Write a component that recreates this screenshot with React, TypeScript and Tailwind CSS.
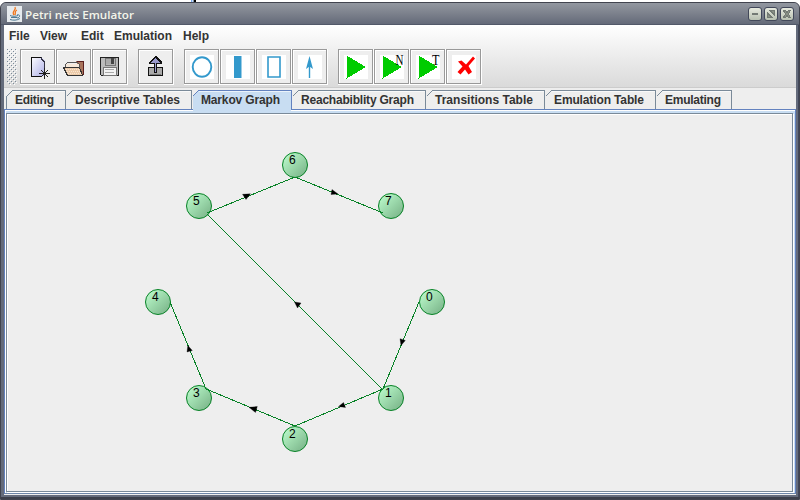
import React from 'react';

const menus = [
  { label: 'File', w: 'w-[31px]' },
  { label: 'View', w: 'w-[41px]' },
  { label: 'Edit', w: 'w-[33px]' },
  { label: 'Emulation', w: 'w-[69px]' },
  { label: 'Help', w: 'w-[40px]' },
];

const tabs = [
  { label: 'Editing', w: 60, t: 39 },
  { label: 'Descriptive Tables', w: 126, t: 105 },
  { label: 'Markov Graph', w: 100, t: 79, active: true },
  { label: 'Reachabiblity Graph', w: 134, t: 113 },
  { label: 'Transitions Table', w: 119, t: 98 },
  { label: 'Emulation Table', w: 111, t: 90 },
  { label: 'Emulating', w: 76, t: 56 },
];

function Label({ children, width }: { children: string; width: number }) {
  return (
    <svg width={width + 2} height="16" className="block shrink-0 overflow-visible">
      <text x="0" y="12" textLength={width} className="fill-[#333] text-[12px] font-bold">{children}</text>
    </svg>
  );
}

const play = <path d="M2.500 .5v23l19.500-11.500z" fill="#00cc00" />;

const icons: Record<string, React.ReactNode> = {
  fresh: (
    <>
      <path d="M5 2h10l4 4v15H5z" fill="url(#paper)" />
      <path d="M5.500 21V2.500h10M5 21.500h10" stroke="#111" fill="none" />
      <path d="M15.500 2v2h1v1h1v1h1v7" stroke="#334" fill="none" />
      <path d="M18.500 13v11M13 18.500h11M15 15l7 7M22 15l-7 7" stroke="#222" fill="none" />
    </>
  ),
  open: (
    <>
      <path d="M14 6h7v14h-3z" fill="#a9745c" />
      <path d="M13 7.500h2v-1h6V20" stroke="#5c2020" fill="none" />
      <path d="M4 9h13v6H4z" fill="#f6e8d9" />
      <path d="M1.500 12.500h16l3 8H5.500z" fill="#eccbaa" stroke="#333" />
      <path d="M3.500 12V9.500l2-2h10l2 2v3" stroke="#555" fill="none" />
      <path d="M4 14.500h13M5 16.500h13M6 18.500h13" stroke="#fae5d0" strokeDasharray="1 1" />
    </>
  ),
  save: (
    <>
      <path d="M2.500 2.500h18v18h-17l-1-1z" fill="#bbb" stroke="#222" />
      <path d="M7 3h10v7H7z" fill="#b5b5b5" stroke="#777" />
      <path d="M8 4h5v5H8z" fill="#aaa" /><path d="M13 3h3v6h-3z" fill="#444" />
      <path d="M5 12h13v8H5z" fill="#f4f4f4" stroke="#777" />
      <path d="M7 14.500h9M7 17.500h9" stroke="#aaa" />
    </>
  ),
  up: (
    <>
      <path d="M4 12h15v9H4z" fill="#111" />
      <path d="M5 13h13v7H5z" fill="#aaa" />
      <path d="M6 19h11" stroke="#777" />
      <path d="M10 18V9H5V7l6-6h1l6 6v2h-5v9z" fill="#111" />
      <path d="M11 17V8H7l4-5h1l4 5h-4v9z" fill="#9999cc" />
    </>
  ),
  place: <ellipse cx="12" cy="12" rx="9.300" ry="9.800" fill="none" stroke="#3399cc" strokeWidth="1.900" shapeRendering="auto" />,
  bar: <path d="M8 1h7.500v22H8z" fill="#3399cc" shapeRendering="auto" />,
  box: <path d="M6 2h12v20H6z" fill="#fff" stroke="#3399cc" strokeWidth="1.600" shapeRendering="auto" />,
  arc: (
    <g shapeRendering="auto"><path d="M11.500 1l3.500 13-3.500-2.500L8 14z" fill="#3399cc" /><path d="M11.500 10v13" stroke="#3399cc" strokeWidth="1.400" /></g>
  ),
  play,
  playN: play,
  playT: play,
  stop: <path d="M6 6.500l3.500-1 4.500 4 7-8 2 2-6.500 7.500 3.500 6-3.500 2.500-3.500-5-4.500 5-3-2.500 5-5.500z" fill="#f00" shapeRendering="auto" />,
};

function Tool({ name, letter }: { name: string; letter?: string }) {
  const plain = ['fresh', 'open', 'save', 'up'].includes(name);
  return (
    <div className="flex h-[36px] w-[36px] border-r border-b border-white">
      <div className="flex h-[35px] w-[35px] border border-[#999] bg-[#eee] pt-[5px] pl-[5px] shadow-[inset_1px_1px_0_#fff]">
        <svg width="24" height="24" viewBox="0 0 24 24" shapeRendering="crispEdges" className={plain ? 'shrink-0 overflow-visible' : 'shrink-0 overflow-visible bg-white'}>
          {icons[name]}
          {letter && <text x={letter === 'N' ? 15.5 : 16} y="10" textLength={letter === 'N' ? 8 : 7.5} lengthAdjust="spacingAndGlyphs" className="fill-black font-['Liberation_Serif',serif] text-[14px]">{letter}</text>}
        </svg>
      </div>
    </div>
  );
}

const nodes = [
  [432, 302], [391, 398], [295, 439], [199, 398],
  [158, 302], [199, 206], [295, 165], [391, 206],
];

const edges = [
  'M207 213L295 177', 'M295 177L383 213', 'M419 302L383 389',
  'M383 389L295 426', 'M295 426L206 389', 'M206 389L170 302',
];

const arrows = [
  'M242.500 194.300L250.500 193.800L246 199.500z',
  'M332 189.500L338 194L331 194.500z',
  'M400 338.700L405.300 340.500L401 345.500z',
  'M338.500 406.500L343.500 402.500L345.500 407.500z',
  'M249 407.300L257.300 406.500L255.500 412.500z',
  'M187.800 345.500L192.300 350.500L187 352z',
  'M294.500 302L301 303L297.500 308z',
];

function Graph() {
  return (
    <svg width="786" height="376" viewBox="8 115 786 376" className="block">
      <defs>
        <linearGradient id="ball" x1="0" y1="0" x2="1" y2="1">
          <stop offset="0.150" stopColor="#b5f4c5" /><stop offset="0.900" stopColor="#7cb68b" />
        </linearGradient>
      </defs>
      {nodes.map(([x, y], i) => (
        <g key={i}>
          <circle cx={x} cy={y} r="12.500" fill="url(#ball)" stroke="#078226" />
          <text x={x - 6} y={y - 1} className="fill-black text-[12px]">{i}</text>
        </g>
      ))}
      <g fill="none" stroke="#078226" shapeRendering="crispEdges">
        {edges.map((d) => <path key={d} d={d} />)}
        <path d="M382.500 389.500L207.500 214.500" />
      </g>
      <g>{arrows.map((d) => <path key={d} d={d} stroke="#000" strokeWidth="0.300" />)}</g>
    </svg>
  );
}

function WindowButton({ d }: { d: string }) {
  return (
    <div className="h-[14px] w-[14px] rounded-[3px] border border-[#42485a] bg-gradient-to-b from-[#e7eadf] to-[#b8c0b1]">
      <svg width="12" height="12" viewBox="0 0 12 12" shapeRendering="crispEdges"><path d={d} fill="#8a9186" stroke="#737a74" /></svg>
    </div>
  );
}

function Tab({ w, t, label, active, first }: { w: number; t: number; label: string; active?: boolean; first: boolean }) {
  return (
    <div className="relative h-[20px]" style={{ width: w }}>
      <svg width={w + 1} height="20" className="absolute left-0 top-0 overflow-visible" shapeRendering="crispEdges">
        <path d={`M.5 20V6.500L6.500.5H${w - 0.5}V20z`} fill={active ? '#c8ddf2' : '#eee'} />
        <path d={`M.5 6.500L6.500.5H${w - 0.5}V19`} fill="none" stroke={active ? '#6382bf' : '#7a8a99'} />
        {first && <path d="M.5 6V19" stroke="#7a8a99" />}
        <path d={`M7 1.500H${w - 1}`} stroke="#fff" opacity="0.650" />
      </svg>
      <div className="relative pt-[2px] pl-[9px]"><Label width={t}>{label}</Label></div>
    </div>
  );
}

export default function App() {
  return (
    <div className="h-[500px] w-[800px] overflow-hidden bg-white pt-[2px] font-['Liberation_Sans',Arial,sans-serif]">
      <div className="relative flex h-[498px] w-[800px] flex-col rounded-t-[6px] border border-[#41444f] bg-[#646b7b] px-[3px] pb-[3px] shadow-[inset_0_-2px_0_#3d404b,inset_-1px_0_0_#42475a]">
        <header className="-mx-[3px] flex h-[22px] shrink-0 items-center rounded-t-[5px] border-b border-[#525969] bg-gradient-to-b from-[#9297a0] via-[#7c818c] to-[#646a79] pr-[5px] pl-[6px]">
          <svg width="15" height="16" viewBox="0 0 15 16" className="bg-[#e6eaed]">
            <path d="M8 1c2 3-4 4-1 8M10 4c-3 1-1 3-2 5" fill="none" stroke="#ef761d" strokeWidth="1.300" />
            <path d="M3 9.500c2 1 6 1 8 0M4 11.500h6M10 9c4-1 3 3 0 3M3 13.500c3 1 7 1 10-1" fill="none" stroke="#4c7892" />
          </svg>
          <svg width="115" height="18" className="ml-[3px]"><text x="0" y="13.500" textLength="109" lengthAdjust="spacingAndGlyphs" className="fill-[#f4f5ea] font-['Open_Sans',sans-serif] text-[11.5px] font-semibold">Petri nets Emulator</text></svg>
          <div className="ml-auto flex gap-[2px]">
            <WindowButton d="M3.500 5.500h5v1h-5z" />
            <WindowButton d="M5 2.500h4.500V7zM2.500 5v4.500H7z" />
            <WindowButton d="M2.500 2.500h2l1.500 2 1.500-2h2l-2 3.500 2 3.500h-2L6 7.500l-1.500 2h-2l2-3.500z" />
          </div>
        </header>
        <main className="flex h-[470px] w-[792px] flex-col bg-[#eee]">
          <div className="h-[62px] bg-gradient-to-b from-white to-[#dadada]">
            <nav className="flex h-[23px] pt-[2px] pl-[5px]">
              {menus.map((m) => (
                <div key={m.label} className={`${m.w} h-[18px] shrink-0 whitespace-nowrap text-[12px] leading-[18px] font-bold text-[#333]`}>
                  {m.label}
                </div>
              ))}
            </nav>
            <div className="flex h-[38px] pt-px pl-[3px]">
              <svg width="10" height="36" className="mr-[3px] shrink-0" shapeRendering="crispEdges">
                <defs>
                  <pattern id="grip" width="4" height="4" patternUnits="userSpaceOnUse">
                    <path d="M0 0h1v1H0zM2 2h1v1H2z" fill="#7a8a99" />
                    <path d="M1 1h1v1H1zM3 3h1v1H3z" fill="#fff" />
                  </pattern>
                </defs>
                <rect width="10" height="36" fill="url(#grip)" />
              </svg>
              <div className="flex gap-[10px]">
                <div className="flex"><Tool name="fresh" /><Tool name="open" /><Tool name="save" /></div>
                <Tool name="up" />
                <div className="flex"><Tool name="place" /><Tool name="bar" /><Tool name="box" /><Tool name="arc" /></div>
                <div className="flex"><Tool name="play" /><Tool name="playN" letter="N" /><Tool name="playT" letter="T" /><Tool name="stop" /></div>
              </div>
            </div>
          </div>
          <div className="h-px bg-[#ccc]" />
          <div className="flex h-[21px] shrink-0 pt-[2px] pl-[2px]">
            {tabs.map((t, i) => <Tab key={t.label} {...t} first={i === 0} />)}
          </div>
          <section className="relative h-[385px] w-[792px] border border-[#6382bf] border-b-[#6e86a8] bg-[#c8ddf2] px-px pt-[3px] pb-[3px] shadow-[inset_1px_1px_0_white]">
            <div className="absolute -top-px left-[188px] h-[2px] w-[98px] bg-[#c8ddf2]" />
            <div className="h-[379px] w-[787px] border border-[#7a8a99] bg-[#eee] shadow-[1px_1px_0_white,inset_1px_1px_0_white]">
              <div className="pt-px pl-px"><Graph /></div>
            </div>
          </section>
        </main>
      </div>
      <svg width="0" height="0" className="absolute"><defs><linearGradient id="paper" x1="0" y1="0" x2="1" y2="1"><stop stopColor="#fff" /><stop offset="1" stopColor="#aeb0e8" /></linearGradient></defs></svg>
      <div className="absolute top-0 left-[191px] h-[2px] w-[5px] border-l border-[#76a8ed] bg-gradient-to-r from-[#c3daf8] from-30% to-black to-60%" />
    </div>
  );
}
